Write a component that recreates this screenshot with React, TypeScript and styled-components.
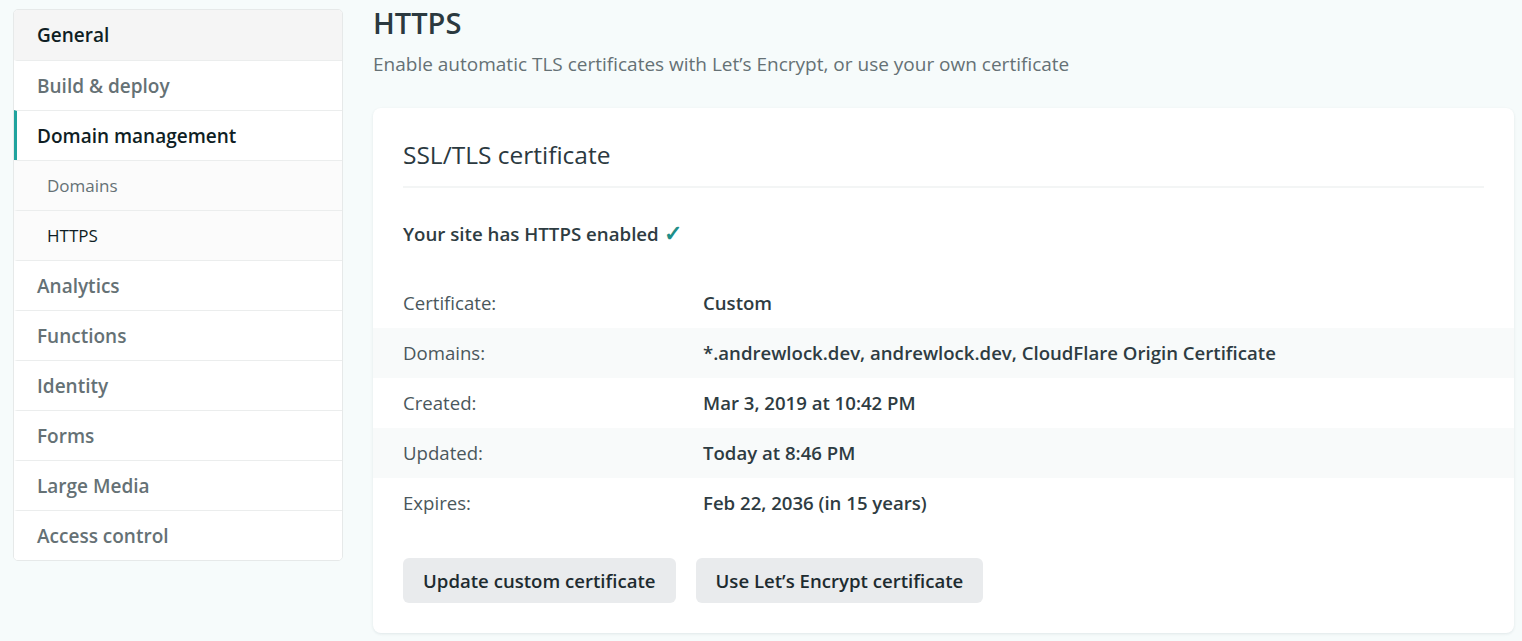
import styled, { createGlobalStyle } from "styled-components";

const GlobalStyle = createGlobalStyle`
  * { box-sizing: border-box; }
  html, body {
    margin: 0;
    background: #f6fbfb;
    font-family: "Open Sans", "Noto Sans", sans-serif;
    color: #2e3c42;
  }
`;

type NavItem = { label: string; sub?: boolean; active?: boolean; current?: boolean; selected?: boolean };

const navItems: NavItem[] = [
  { label: "General", selected: true },
  { label: "Build & deploy" },
  { label: "Domain management", current: true },
  { label: "Domains", sub: true },
  { label: "HTTPS", sub: true, active: true },
  { label: "Analytics" },
  { label: "Functions" },
  { label: "Identity" },
  { label: "Forms" },
  { label: "Large Media" },
  { label: "Access control" },
];

const details = [
  { label: "Certificate:", value: "Custom" },
  { label: "Domains:", value: "*.andrewlock.dev, andrewlock.dev, CloudFlare Origin Certificate" },
  { label: "Created:", value: "Mar 3, 2019 at 10:42 PM" },
  { label: "Updated:", value: "Today at 8:46 PM" },
  { label: "Expires:", value: "Feb 22, 2036 (in 15 years)" },
];

const App = () => {
  return (
    <>
      <GlobalStyle />
      <Page>
        <Sidebar>
          {navItems.map((item) => (
            <NavLink
              key={item.label}
              $sub={item.sub}
              $dark={item.active || item.current || item.selected}
              $current={item.current}
              $selected={item.selected}
            >
              {item.label}
            </NavLink>
          ))}
        </Sidebar>
        <Main>
          <Title>HTTPS</Title>
          <Subtitle>Enable automatic TLS certificates with Let’s Encrypt, or use your own certificate</Subtitle>
          <Card>
            <CardHeader>SSL/TLS certificate</CardHeader>
            <Status>
              Your site has HTTPS enabled <Check>✓</Check>
            </Status>
            <DetailList>
              {details.map((d) => (
                <DetailRow key={d.label}>
                  <DetailLabel>{d.label}</DetailLabel>
                  <DetailValue>{d.value}</DetailValue>
                </DetailRow>
              ))}
            </DetailList>
            <Actions>
              <Button type="button">Update custom certificate</Button>
              <Button type="button">Use Let’s Encrypt certificate</Button>
            </Actions>
          </Card>
        </Main>
      </Page>
    </>
  );
};

const Page = styled.div`
  display: flex;
  align-items: flex-start;
  gap: 30px;
  padding: 9px 8px 8px 13px;
`;

const Sidebar = styled.nav`
  width: 330px;
  flex-shrink: 0;
  background: #fff;
  border: 1px solid #e6e9e9;
  border-radius: 5px;
  overflow: hidden;
  display: flex;
  flex-direction: column;
`;

const NavLink = styled.a<{ $sub?: boolean; $dark?: boolean; $current?: boolean; $selected?: boolean }>`
  display: flex;
  align-items: center;
  height: 50px;
  padding-left: ${(p) => (p.$sub ? "30px" : "20px")};
  font-size: ${(p) => (p.$sub ? "17px" : "19px")};
  font-weight: ${(p) => (p.$sub ? 500 : 600)};
  color: ${(p) => (p.$dark ? "#0f1e24" : "#657175")};
  background: ${(p) => (p.$selected ? "#f5f5f5" : p.$sub ? "#fbfbfb" : "#fff")};
  border-top: 1px solid #ebeded;
  border-left: 3px solid ${(p) => (p.$current ? "#20a39e" : "transparent")};
  cursor: pointer;
  &:first-child { border-top: none; }
`;

const Main = styled.main`
  flex: 1;
  min-width: 0;
`;

const Title = styled.h1`
  margin: 0;
  font-size: 29px;
  font-weight: 600;
  line-height: 28px;
  color: #2b393f;
`;

const Subtitle = styled.p`
  margin: 14px 0 0;
  font-size: 19px;
  line-height: 26px;
  color: #657175;
`;

const Card = styled.section`
  margin-top: 31px;
  background: #fff;
  border-radius: 8px;
  box-shadow: 0 1px 3px rgba(30, 60, 70, 0.1);
  padding: 29px 0 30px;
`;

const CardHeader = styled.h2`
  margin: 0 30px;
  padding-bottom: 13px;
  border-bottom: 2px solid #f3f5f5;
  font-size: 24.5px;
  font-weight: 500;
  line-height: 36px;
  color: #2b393f;
`;

const Status = styled.p`
  margin: 30px 30px 0;
  font-size: 18.7px;
  font-weight: 600;
  line-height: 28px;
  color: #2e3c42;
`;

const Check = styled.span`
  color: #1f8f89;
  font-size: 22px;
  font-weight: 700;
`;

const DetailList = styled.div`
  margin-top: 30px;
`;

const DetailRow = styled.div`
  display: grid;
  grid-template-columns: 300px 1fr;
  align-items: center;
  height: 50px;
  padding: 0 30px 2px;
  &:nth-child(even) { background: #f8fafa; }
`;

const DetailLabel = styled.span`
  font-size: 18.6px;
  color: #4a575c;
`;

const DetailValue = styled.span`
  font-size: 18.6px;
  font-weight: 600;
  color: #2e3c42;
`;

const Actions = styled.div`
  display: flex;
  gap: 20px;
  margin: 30px 30px 0;
`;

const Button = styled.button`
  height: 45px;
  padding: 0 20px;
  border: none;
  border-radius: 6px;
  background: #e9ebed;
  font-family: inherit;
  font-size: 18.6px;
  font-weight: 600;
  color: #1e2b30;
  cursor: pointer;
`;

export default App;
